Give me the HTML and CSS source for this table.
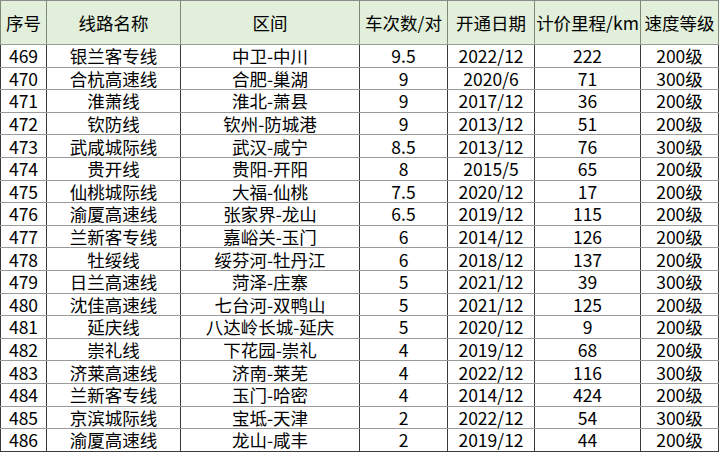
FILE: index.html
```html
<!DOCTYPE html>
<html lang="zh-CN">
<head>
<meta charset="utf-8">
<title>线路表</title>
<link rel="stylesheet" href="styles.css">
</head>
<body>
<table class="sheet">
  <colgroup>
    <col class="c1"><col class="c2"><col class="c3"><col class="c4"><col class="c5"><col class="c6"><col class="c7">
  </colgroup>
  <thead>
    <tr class="head">
      <th>序号</th><th>线路名称</th><th>区间</th><th>车次数/对</th><th>开通日期</th><th>计价里程/km</th><th>速度等级</th>
    </tr>
  </thead>
  <tbody>
    <tr><td>469</td><td>银兰客专线</td><td>中卫-中川</td><td>9.5</td><td>2022/12</td><td>222</td><td>200级</td></tr>
    <tr><td>470</td><td>合杭高速线</td><td>合肥-巢湖</td><td>9</td><td>2020/6</td><td>71</td><td>300级</td></tr>
    <tr><td>471</td><td>淮萧线</td><td>淮北-萧县</td><td>9</td><td>2017/12</td><td>36</td><td>200级</td></tr>
    <tr><td>472</td><td>钦防线</td><td>钦州-防城港</td><td>9</td><td>2013/12</td><td>51</td><td>200级</td></tr>
    <tr><td>473</td><td>武咸城际线</td><td>武汉-咸宁</td><td>8.5</td><td>2013/12</td><td>76</td><td>300级</td></tr>
    <tr><td>474</td><td>贵开线</td><td>贵阳-开阳</td><td>8</td><td>2015/5</td><td>65</td><td>200级</td></tr>
    <tr><td>475</td><td>仙桃城际线</td><td>大福-仙桃</td><td>7.5</td><td>2020/12</td><td>17</td><td>200级</td></tr>
    <tr><td>476</td><td>渝厦高速线</td><td>张家界-龙山</td><td>6.5</td><td>2019/12</td><td>115</td><td>200级</td></tr>
    <tr><td>477</td><td>兰新客专线</td><td>嘉峪关-玉门</td><td>6</td><td>2014/12</td><td>126</td><td>200级</td></tr>
    <tr><td>478</td><td>牡绥线</td><td>绥芬河-牡丹江</td><td>6</td><td>2018/12</td><td>137</td><td>200级</td></tr>
    <tr><td>479</td><td>日兰高速线</td><td>菏泽-庄寨</td><td>5</td><td>2021/12</td><td>39</td><td>300级</td></tr>
    <tr><td>480</td><td>沈佳高速线</td><td>七台河-双鸭山</td><td>5</td><td>2021/12</td><td>125</td><td>200级</td></tr>
    <tr><td>481</td><td>延庆线</td><td>八达岭长城-延庆</td><td>5</td><td>2020/12</td><td>9</td><td>200级</td></tr>
    <tr><td>482</td><td>崇礼线</td><td>下花园-崇礼</td><td>4</td><td>2019/12</td><td>68</td><td>200级</td></tr>
    <tr><td>483</td><td>济莱高速线</td><td>济南-莱芜</td><td>4</td><td>2022/12</td><td>116</td><td>300级</td></tr>
    <tr><td>484</td><td>兰新客专线</td><td>玉门-哈密</td><td>4</td><td>2014/12</td><td>424</td><td>200级</td></tr>
    <tr><td>485</td><td>京滨城际线</td><td>宝坻-天津</td><td>2</td><td>2022/12</td><td>54</td><td>300级</td></tr>
    <tr><td>486</td><td>渝厦高速线</td><td>龙山-咸丰</td><td>2</td><td>2019/12</td><td>44</td><td>200级</td></tr>
  </tbody>
</table>
</body>
</html>
```
FILE: styles.css
```css
html, body {
  margin: 0;
  padding: 0;
  background: #ffffff;
}
.sheet {
  border-collapse: collapse;
  table-layout: fixed;
  width: 718px;
  font-family: "Noto Sans CJK SC", "Noto Sans", sans-serif;
  font-size: 17.5px;
  color: #000;
}
.c1 { width: 46px; }
.c2 { width: 134px; }
.c3 { width: 179px; }
.c4 { width: 88px; }
.c5 { width: 87px; }
.c6 { width: 106px; }
.c7 { width: 78px; }
.sheet th,
.sheet td {
  padding: 0;
  text-align: center;
  vertical-align: middle;
  white-space: nowrap;
  overflow: hidden;
  line-height: 18px;
  border-left: 1px solid #3a3a3a;
  border-right: 1px solid #3a3a3a;
  border-top: 1px solid #9a9a9a;
  border-bottom: 1px solid #9a9a9a;
}
.head {
  height: 44px;
}
.sheet tbody tr {
  height: 22.6px;
}
.sheet th {
  font-weight: normal;
  background: #e2efda;
  border-left-color: #7d8a76;
  border-right-color: #7d8a76;
  border-top-color: #8c8c8c;
}
.sheet td {
  padding-top: 1px;
}
.sheet tbody tr:last-child td {
  border-bottom-color: #3a3a3a;
}
```
